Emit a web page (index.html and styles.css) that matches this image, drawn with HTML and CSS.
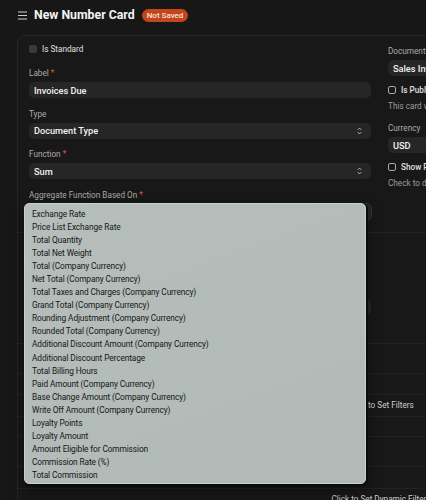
FILE: index.html
```html
<!DOCTYPE html>
<html>
<head>
<meta charset="utf-8">
<link rel="stylesheet" href="styles.css">
</head>
<body>
<header class="topbar">
  <svg class="burger" width="9" height="9" viewBox="0 0 9 9"><path d="M0 1h9M0 4.5h9M0 8h9" stroke="#d0d0d0" stroke-width="1.1" fill="none"/></svg>
  <h1 class="title">New Number Card</h1>
  <span class="badge">Not Saved</span>
</header>
<main class="card">
  <section class="sec sec-main">
    <div class="col col-left">
      <div class="check-row"><span class="box box-filled"></span><span>Is Standard</span></div>
      <div class="field">
        <div class="label">Label <span class="req">*</span></div>
        <div class="input">Invoices Due</div>
      </div>
      <div class="field">
        <div class="label">Type</div>
        <div class="input select">Document Type<svg class="chev" width="5" height="8" viewBox="0 0 5 8"><path d="M0.8 2.8L2.5 1.1L4.2 2.8M0.8 5.2L2.5 6.9L4.2 5.2" stroke="#c8c8c8" stroke-width="0.9" fill="none"/></svg></div>
      </div>
      <div class="field">
        <div class="label">Function <span class="req">*</span></div>
        <div class="input select">Sum<svg class="chev" width="5" height="8" viewBox="0 0 5 8"><path d="M0.8 2.8L2.5 1.1L4.2 2.8M0.8 5.2L2.5 6.9L4.2 5.2" stroke="#c8c8c8" stroke-width="0.9" fill="none"/></svg></div>
      </div>
      <div class="field last">
        <div class="label">Aggregate Function Based On <span class="req">*</span></div>
        <div class="input select focus"></div>
      </div>
    </div>
    <div class="col col-right">
      <div class="label">Document Type <span class="req">*</span></div>
      <div class="input">Sales Invoice</div>
      <div class="check-row mt9"><span class="box box-outline"></span><span>Is Public</span></div>
      <div class="help">This card will be available to all Users if this is set</div>
      <div class="label mt12">Currency</div>
      <div class="input">USD</div>
      <div class="check-row mt9"><span class="box box-outline"></span><span>Show Percentage Stats</span></div>
      <div class="help">Check to display percentage stats</div>
    </div>
  </section>
  <section class="sec sec-two">
    <div class="col col-left">
      <div class="label-space"></div>
      <div class="input select"></div>
    </div>
  </section>
  <section class="rows">
    <div class="row r29"></div>
    <div class="row r20"></div>
    <div class="row r21 center">Click to Set Filters</div>
    <div class="row r19"></div>
    <div class="row r29"></div>
    <div class="row r21"></div>
    <div class="row last center">Click to Set Dynamic Filters</div>
  </section>
</main>
<ul class="dropdown">
  <li>Exchange Rate</li>
  <li>Price List Exchange Rate</li>
  <li>Total Quantity</li>
  <li>Total Net Weight</li>
  <li>Total (Company Currency)</li>
  <li>Net Total (Company Currency)</li>
  <li>Total Taxes and Charges (Company Currency)</li>
  <li>Grand Total (Company Currency)</li>
  <li>Rounding Adjustment (Company Currency)</li>
  <li>Rounded Total (Company Currency)</li>
  <li>Additional Discount Amount (Company Currency)</li>
  <li>Additional Discount Percentage</li>
  <li>Total Billing Hours</li>
  <li>Paid Amount (Company Currency)</li>
  <li>Base Change Amount (Company Currency)</li>
  <li>Write Off Amount (Company Currency)</li>
  <li>Loyalty Points</li>
  <li>Loyalty Amount</li>
  <li>Amount Eligible for Commission</li>
  <li>Commission Rate (%)</li>
  <li>Total Commission</li>
</ul>
</body>
</html>
```
FILE: styles.css
```css
html, body {
  margin: 0;
  padding: 0;
  overflow: hidden;
}
body {
  background: #171717;
  font-family: Roboto, "Noto Sans", sans-serif;
  color: #e8e8e8;
  width: 426px;
  height: 500px;
  position: relative;
}
.topbar {
  height: 35px;
  display: flex;
  align-items: center;
  padding: 0 0 5px 18px;
  box-sizing: border-box;
}
.burger {
  display: block;
}
.title {
  margin: 0 0 0 7px;
  font-size: 12.3px;
  font-weight: 700;
  color: #f4f4f4;
}
.badge {
  margin-left: 7px;
  background: #c4441c;
  color: #f6e4dc;
  font-size: 8px;
  font-weight: 500;
  line-height: 13px;
  padding: 0 5px;
  border-radius: 7px;
}
.card {
  margin-left: 17px;
  width: 726px;
  border: 1px solid #262626;
  border-radius: 8px;
  background: #181818;
}
.sec {
  border-bottom: 1px solid #232323;
}
.sec-main {
  display: flex;
  padding: 8px 12px 12px 11px;
  gap: 17px;
}
.col-left {
  width: 342px;
}
.col-right {
  width: 330px;
  padding-top: 2px;
}
.check-row {
  height: 10px;
  display: flex;
  align-items: center;
  gap: 5px;
  font-size: 8.2px;
  color: #e0e0e0;
  margin-bottom: 14px;
}
.col-right .check-row {
  margin-bottom: 0;
  font-weight: 500;
}
.box {
  width: 8px;
  height: 8px;
  border-radius: 2px;
  box-sizing: border-box;
}
.box-filled {
  background: #3a3a3a;
}
.box-outline {
  border: 1px solid #a8a8a8;
}
.mt9 {
  margin-top: 9px;
}
.mt12 {
  margin-top: 12px;
}
.field {
  margin-bottom: 10.5px;
}
.field.last {
  margin-bottom: 0;
}
.label {
  font-size: 8.2px;
  line-height: 10px;
  color: #ababab;
  margin-bottom: 4px;
}
.label-space {
  height: 10px;
  margin-bottom: 4px;
}
.req {
  color: #e0524a;
}
.input {
  height: 16px;
  background: #262626;
  border-radius: 5px;
  padding-left: 5px;
  padding-right: 9px;
  font-size: 9.2px;
  font-weight: 500;
  color: #f2f2f2;
  display: flex;
  align-items: center;
  justify-content: space-between;
  box-sizing: border-box;
}
.input.focus {
  box-shadow: 0 0 0 1px #333;
}
.chev {
  display: block;
}
.help {
  margin-top: 6px;
  font-size: 8.2px;
  line-height: 10px;
  color: #9c9c9c;
  white-space: nowrap;
}
.sec-two {
  padding: 52px 12px 28px 11px;
}
.rows {
  display: flex;
  flex-direction: column;
}
.row {
  border-bottom: 1px solid #222;
  font-size: 8.2px;
  color: #cfcfcf;
  display: flex;
  align-items: center;
  justify-content: center;
}
.r29 { height: 29px; }
.r20 { height: 20px; }
.r21 { height: 21px; }
.r19 { height: 19px; }
.row.last {
  border-bottom: none;
  height: 20px;
}
.dropdown {
  position: absolute;
  left: 24px;
  top: 203px;
  width: 342px;
  height: 281px;
  margin: 0;
  padding: 3.5px 0 0 0;
  list-style: none;
  box-sizing: border-box;
  background: linear-gradient(160deg, #b6bebb 0%, #b1bab7 100%);
  border: 1px solid #c9d0cd;
  border-radius: 5px;
  box-shadow: 1px 1px 0 1px #0b0b0b, 0 6px 16px rgba(0, 0, 0, 0.45);
}
.dropdown li {
  height: 13.1px;
  line-height: 13.1px;
  padding-left: 7px;
  font-size: 8.3px;
  letter-spacing: -0.1px;
  color: #141616;
  white-space: nowrap;
}
```
